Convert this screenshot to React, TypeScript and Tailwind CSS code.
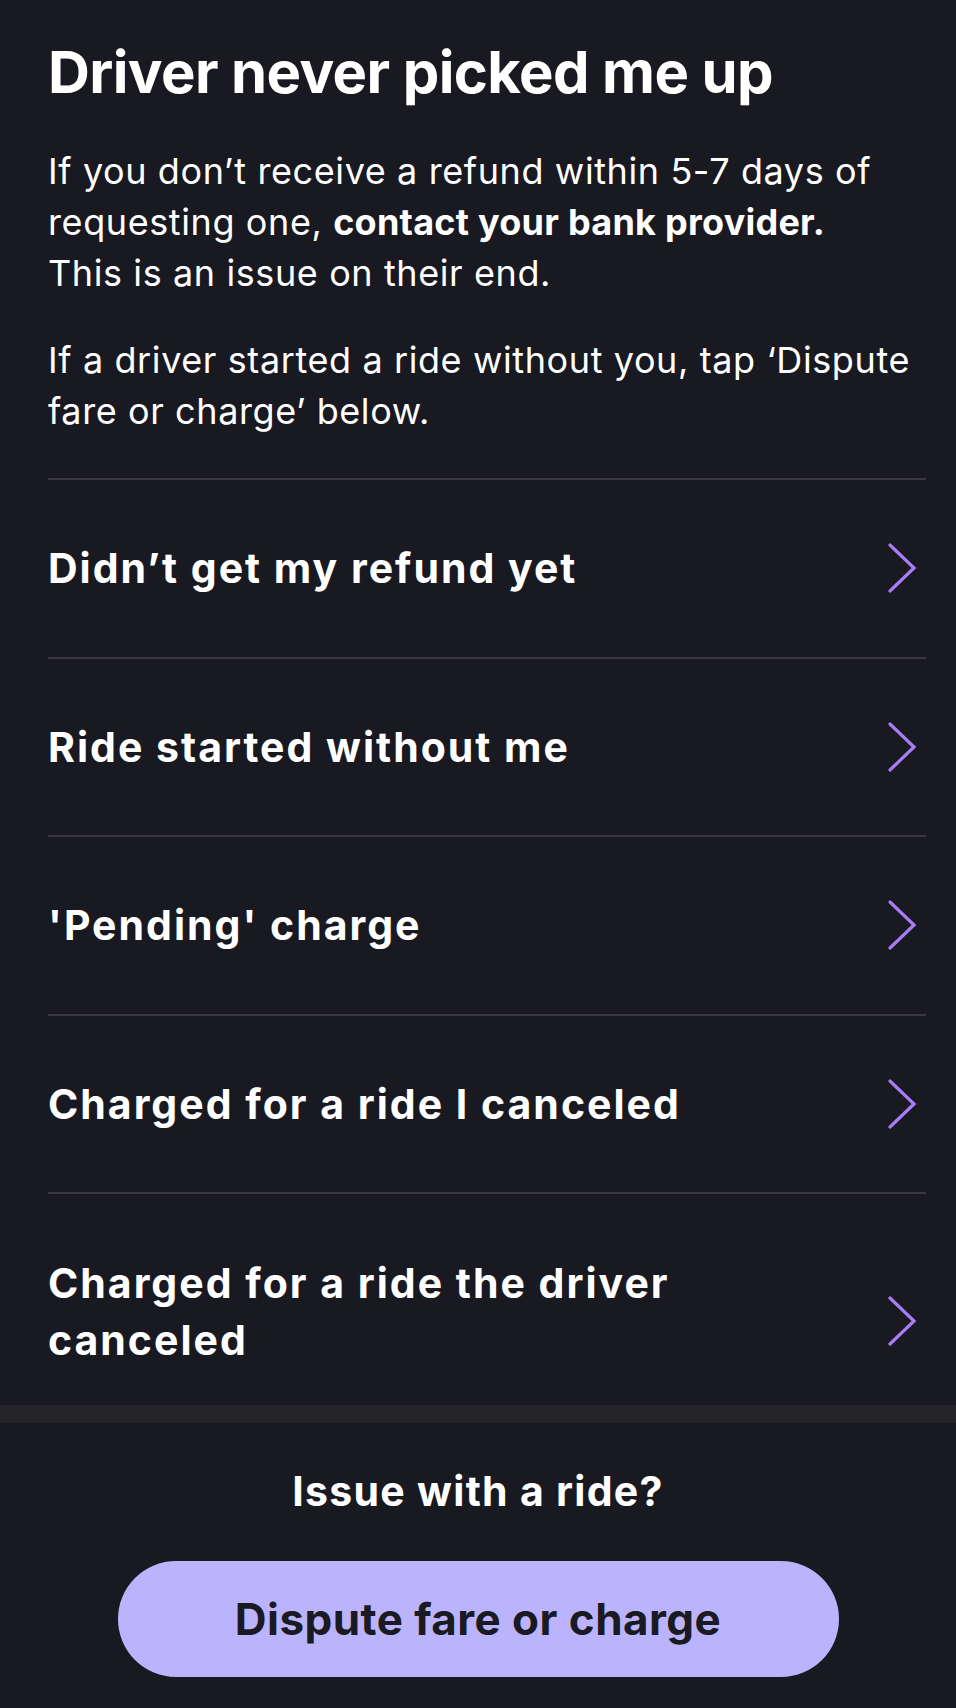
import React from "react";

const Chevron = () => (
  <svg width="30" height="50" viewBox="0 0 30 50" fill="none" className="shrink-0">
    <path d="M3 2 L27 25 L3 48" stroke="#a77df5" strokeWidth="3.2" strokeLinecap="round" strokeLinejoin="miter" />
  </svg>
);

const rows = ["Didn\u2019t get my refund yet", "Ride started without me", "'Pending' charge", "Charged for a ride I canceled"];

export default function App() {
  return (
    <div className="min-h-[1708px] w-full bg-[#191921] text-white" style={{ fontFamily: "Inter, 'Open Sans', sans-serif" }}>
      <div className="pl-[48px] pr-[30px] pt-[37px]">
        <h1 className="text-[58px] font-bold leading-[70px] tracking-[-0.6px]">Driver never picked me up</h1>
        <p className="mt-[39px] text-[36px] leading-[51px] font-normal tracking-[0.6px]">
          If you don’t receive a refund within 5-7 days of
          <br />
          requesting one, <span className="font-bold tracking-[0.25px]">contact your bank provider.</span>
          <br />
          This is an issue on their end.
        </p>
        <p className="mt-[36px] text-[36px] leading-[51px] font-normal tracking-[0.6px]">
          If a driver started a ride without you, tap ‘Dispute
          <br />
          fare or charge’ below.
        </p>
        <div className="mt-[41px]">
          {rows.map((r) => (
            <div key={r}>
              <div className="h-[2px] bg-[#38383e]" />
              <div className="flex h-[176.5px] items-center justify-between pr-[9px]">
                <span className="text-[41px] font-bold leading-[56px] tracking-[2px]">{r}</span>
                <Chevron />
              </div>
            </div>
          ))}
          <div className="h-[2px] bg-[#38383e]" />
          <div className="flex items-center justify-between pr-[9px] pt-[61px] pb-[36px]">
            <span className="text-[41px] font-bold leading-[57px] tracking-[2px]">
              Charged for a ride the driver
              <br />
              canceled
            </span>
            <div className="mt-[17px]">
              <Chevron />
            </div>
          </div>
        </div>
      </div>
      <div className="h-[18px] bg-[#242429]" />
      <div className="flex flex-col items-center pt-[40px] pb-[30px]">
        <div className="text-[41px] font-bold leading-[56px] tracking-[1.3px]">Issue with a ride?</div>
        <button className="mt-[42px] flex h-[116px] w-[721px] items-center justify-center rounded-full bg-[#bcb3fd] text-[44px] font-bold tracking-[0.45px] text-[#1a1a22]">
          Dispute fare or charge
        </button>
      </div>
    </div>
  );
}
